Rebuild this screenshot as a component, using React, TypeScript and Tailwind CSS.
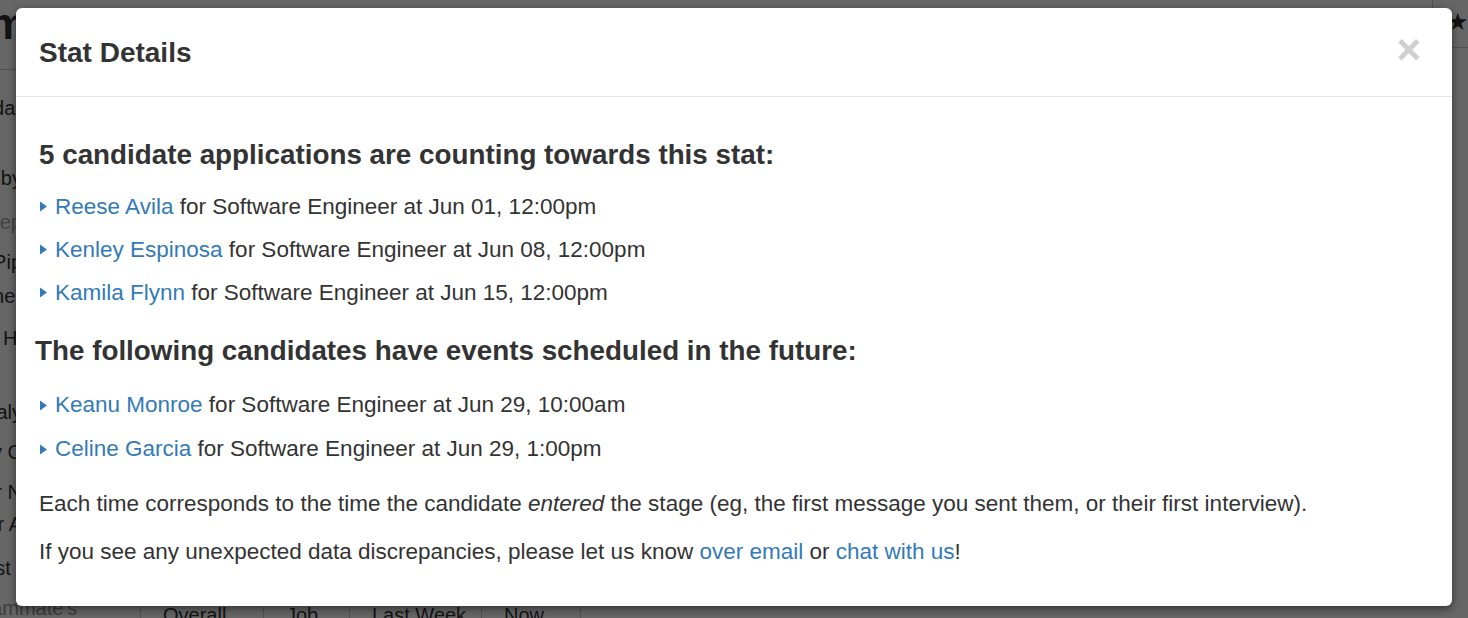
import React from "react";

const font = { fontFamily: '"Liberation Sans", Arial, sans-serif' };

function Caret() {
  return (
    <svg width="7" height="11" viewBox="0 0 7 11" className="mr-[8px] shrink-0 text-[#337ab7]">
      <path d="M0 0.5 L7 5.5 L0 10.5 Z" fill="currentColor" />
    </svg>
  );
}

function Entry({ name, when, tall }: { name: string; when: string; tall?: boolean }) {
  return (
    <div className={`flex items-center pl-px ${tall ? "h-[44px]" : "h-[43px]"}`}>
      <Caret />
      <span>
        <a className="text-[#337ab7]">{name}</a> for Software Engineer at {when}
      </span>
    </div>
  );
}

export default function App() {
  const counted = [
    { name: "Reese Avila", when: "Jun 01, 12:00pm" },
    { name: "Kenley Espinosa", when: "Jun 08, 12:00pm" },
    { name: "Kamila Flynn", when: "Jun 15, 12:00pm" },
  ];
  const future = [
    { name: "Keanu Monroe", when: "Jun 29, 10:00am" },
    { name: "Celine Garcia", when: "Jun 29, 1:00pm" },
  ];
  const sideLines = [
    { t: "Calendar", top: "mt-[26px]" },
    { t: "Sorted by", top: "mt-[46px]" },
    { t: "Sleep", top: "mt-[20px]", muted: true },
    { t: "Pip", top: "mt-[16px]" },
    { t: "Owner", top: "mt-[10px]" },
    { t: "Hi", top: "mt-[18px]" },
    { t: "Analy", top: "mt-[50px]" },
    { t: "By C", top: "mt-[16px]" },
    { t: "For N", top: "mt-[16px]" },
    { t: "For A", top: "mt-[8px]" },
    { t: "Best I", top: "mt-[20px]" },
  ];

  return (
    <div className="relative h-[618px] w-[1468px] overflow-hidden bg-white text-[#333]" style={font}>
      {/* page behind the dialog */}
      <div className="flex h-full">
        <div className="flex w-[140px] flex-col">
          <div className="h-[70px] border-b border-[#ccc]">
            <div className="-ml-[84px] mt-[2px] text-[44px] font-bold leading-[44px]">Team</div>
          </div>
          <div className="flex w-[22px] flex-col items-end text-[20px] leading-[24px]">
            {sideLines.map((l) => (
              <div key={l.t} className={`${l.top} whitespace-nowrap ${l.muted ? "text-[#aaa]" : ""}`}>
                {l.t}
              </div>
            ))}
          </div>
          <div className="mt-auto -ml-[30px] whitespace-nowrap text-[20px] leading-[20px] text-[#999]">Teammate's</div>
        </div>
        <div className="flex flex-1 flex-col">
          <div className="flex h-[48px] justify-end border-b border-[#ccc]">
            <div className="w-[36px] border-l border-[#ccc] pl-[14px] pt-[10px] text-[24px] leading-[24px]">★</div>
          </div>
          <div className="flex-1" />
          <div className="flex h-[16px] text-[20px] leading-[26px]">
            <div className="w-[123px] border-l border-[#ccc] pl-[22px]">Overall</div>
            <div className="w-[86px] border-l border-[#ccc] pl-[22px]">Job</div>
            <div className="w-[132px] border-l border-[#ccc] pl-[22px]">Last Week</div>
            <div className="w-[99px] border-l border-[#ccc] pl-[22px]">Now</div>
            <div className="border-l border-[#ccc]" />
          </div>
        </div>
      </div>

      {/* backdrop */}
      <div className="absolute inset-0 bg-black/60" />

      {/* dialog */}
      <div className="absolute left-[16px] top-[8px] w-[1436px] rounded-[6px] bg-white shadow-[0_3px_9px_rgba(0,0,0,0.5)]">
        <div className="flex h-[89px] items-center justify-between border-b border-[#e5e5e5] pl-[23px] pr-[31px]">
          <h4 className="pt-[1px] text-[28px] font-bold leading-[32px]">Stat Details</h4>
          <span className="mt-[-5px] text-[42px] font-bold leading-[40px] text-[#cfcfcf]">×</span>
        </div>
        <div className="px-[23px] pb-[39px] pt-[40px] text-[22.5px]">
          <h3 className="text-[27.8px] font-bold leading-[36px]">
            5 candidate applications are counting towards this stat:
          </h3>
          <div className="mt-[12px]">
            {counted.map((c) => (
              <Entry key={c.name} {...c} />
            ))}
          </div>
          <h3 className="-ml-[4px] mt-[19px] text-[27.8px] font-bold leading-[36px]">
            The following candidates have events scheduled in the future:
          </h3>
          <div className="mt-[14px]">
            {future.map((c) => (
              <Entry key={c.name} {...c} tall />
            ))}
          </div>
          <p className="mt-[18px] leading-[30px]">
            Each time corresponds to the time the candidate <em>entered</em> the stage (eg, the first message you sent
            them, or their first interview).
          </p>
          <p className="mt-[18px] leading-[30px]">
            If you see any unexpected data discrepancies, please let us know{" "}
            <a className="text-[#337ab7]">over email</a> or <a className="text-[#337ab7]">chat with us</a>!
          </p>
        </div>
      </div>
    </div>
  );
}
